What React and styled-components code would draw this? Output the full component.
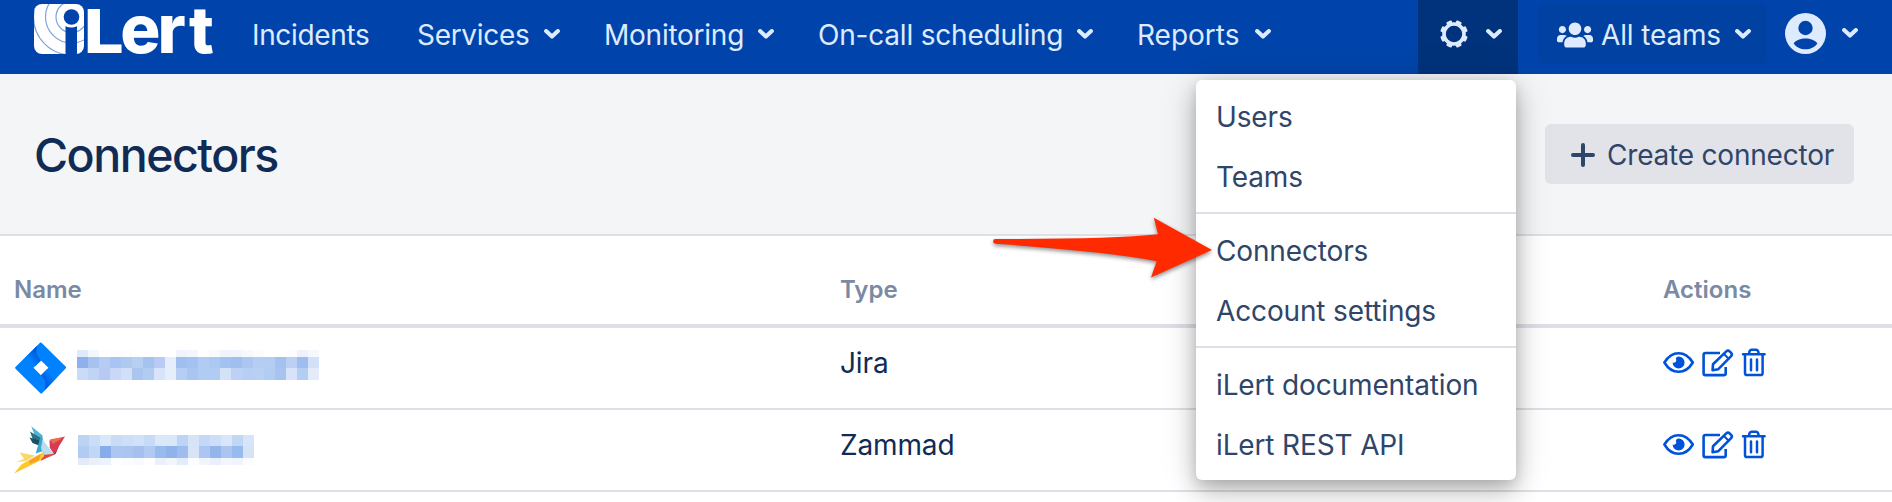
import React from "react";
import styled, { createGlobalStyle } from "styled-components";
import { FaUsers } from "react-icons/fa";

const GlobalStyle = createGlobalStyle`
  * { box-sizing: border-box; }
  html, body { margin: 0; padding: 0; background: #fff; overflow: hidden; }
  body {
    font-family: Inter, "Liberation Sans", sans-serif;
    font-size: 28px;
    font-weight: 380;
    line-height: 40px;
    letter-spacing: -0.14px;
    color: #102b55;
    -webkit-font-smoothing: antialiased;
  }
  svg { display: block; flex: none; }
`;

const Page = styled.div`
  position: relative;
  width: 1892px;
  height: 502px;
  overflow: hidden;
`;

const NavBar = styled.nav`
  display: flex;
  height: 74px;
  padding-left: 34px;
  background: #0044ab;
  color: #deebff;
`;

const LogoLink = styled.a`
  display: block;
  width: 178px;
  padding-top: 4px;
  margin-right: 40px;
`;

const NavGroup = styled.div`
  display: flex;
  margin-right: ${(p) => p.$gap ?? 0}px;
`;

const NavItem = styled.a`
  display: flex;
  align-items: flex-start;
  width: ${(p) => p.$width}px;
  padding-top: 15px;
  white-space: nowrap;
  letter-spacing: ${(p) => p.$spacing ?? -0.2}px;
`;

const NavLabel = styled.span`
  flex: 1;
`;

const Caret = styled.span`
  padding: ${(p) => p.$top ?? 14}px 0 0;
`;

const GearButton = styled.a`
  display: flex;
  justify-content: space-between;
  width: 100px;
  height: 74px;
  padding: 15px 16px 0 22px;
  margin-left: 147px;
  background: #00337c;
`;

const GearSlot = styled.span`
  padding-top: 5px;
`;

const TeamPicker = styled.a`
  display: flex;
  width: 229px;
  height: 60px;
  margin: 4px 0 0 20px;
  padding: 11px 16px 0 19px;
  border-radius: 6px;
  background: #0041a2;
  white-space: nowrap;
`;

const TeamIcon = styled.span`
  width: 44px;
  padding-top: 2px;
`;

const Account = styled.a`
  display: flex;
  gap: 16px;
  margin-left: 18px;
  padding-top: 13px;
`;

const PageHeader = styled.header`
  display: flex;
  justify-content: space-between;
  align-items: flex-start;
  height: 162px;
  padding: 50px 38px 0 34px;
  background: #f4f5f7;
  border-bottom: 2px solid #dfe0e7;
`;

const Title = styled.h1`
  margin: -1px 0 0;
  font-size: 46.5px;
  line-height: 64px;
  font-weight: 480;
  letter-spacing: -1.5px;
`;

const CreateButton = styled.button`
  display: flex;
  align-items: center;
  gap: 12px;
  width: 309px;
  height: 60px;
  padding: 2px 0 0 26px;
  border: 0;
  border-radius: 6px;
  background: #e2e3e9;
  color: #2f4569;
  font: inherit;
  letter-spacing: -0.2px;
  white-space: nowrap;
`;

const Row = styled.div`
  display: grid;
  grid-template-columns: 826px 823px 1fr;
  height: 82px;
  padding-left: 14px;
  border-bottom: 2px solid #dfe0e7;
`;

const HeadRow = styled(Row)`
  height: 92px;
  padding-top: 34px;
  border-bottom-width: 4px;
  font-size: 24px;
  font-weight: 600;
  letter-spacing: 0;
  color: #7a8aa3;
`;

const NameCell = styled.div`
  display: flex;
  align-items: flex-start;
`;

const Brand = styled.span`
  width: 54px;
  padding-top: 14px;
`;

const TypeCell = styled.div`
  padding-top: 15px;
`;

const Actions = styled.div`
  display: flex;
  padding: 18px 0 0;
`;

const Redacted = styled.div`
  display: grid;
  grid-template-columns: repeat(${(p) => p.$cols}, 11px);
  grid-template-rows: ${(p) => p.$rows};
  margin: ${(p) => p.$top}px 0 0 ${(p) => p.$left}px;
`;

const Tile = styled.i`
  background: ${(p) => p.$color};
`;

const Menu = styled.div`
  position: absolute;
  left: 1196px;
  top: 80px;
  width: 320px;
  height: 400px;
  border-radius: 6px;
  background: #fff;
  color: #2f4569;
  box-shadow: 0 12px 24px rgba(0, 0, 0, 0.22), 0 0 40px rgba(0, 0, 0, 0.12), 0 4px 12px rgba(0, 0, 0, 0.1);
`;

const MenuSection = styled.div`
  padding: 8px 0 4px;
  & + & { border-top: 2px solid #dfe0e7; }
`;

const MenuItem = styled.a`
  display: block;
  height: 60px;
  padding: 9px 20px 0;
  white-space: nowrap;
`;

const Pointer = styled.svg`
  position: absolute;
  left: 986px;
  top: 210px;
  filter: drop-shadow(0 2px 2px rgba(0, 0, 0, 0.45));
`;

const Chevron = () => (
  <svg width="16" height="11" viewBox="0 0 16 11">
    <path d="M2.1 2.1 8 7.6l5.9-5.5" fill="none" stroke="#deebff" strokeWidth="4.1" strokeLinecap="round" strokeLinejoin="round" />
  </svg>
);

const Gear = () => (
  <svg width="28" height="28" viewBox="-14 -14 28 28">
    <circle r="10" fill="none" stroke="#deebff" strokeWidth="3.600" />
    {[0, 1, 2, 3, 4, 5, 6, 7].map((i) => (
      <rect key={i} x="-2.900" y="-13.800" width="5.800" height="4" rx="1.200" fill="#deebff" transform={`rotate(${22.5 + i * 45})`} />
    ))}
  </svg>
);

const Avatar = () => (
  <svg width="41" height="41" viewBox="0 0 41 41">
    <circle cx="20.5" cy="20.5" r="20.5" fill="#deebff" />
    <circle cx="20.5" cy="15" r="7.2" fill="#0044ab" />
    <path d="M8.6 30.4c2.2-3 7-4.8 11.9-4.8s9.700 1.800 11.900 4.800c-2.600 3.600-7 5.800-11.900 5.800s-9.300-2.200-11.900-5.800z" fill="#0044ab" />
  </svg>
);

const LogoSvg = styled.svg`
  overflow: visible;
  letter-spacing: 0;
`;

const Logo = () => (
  <LogoSvg width="178" height="50" viewBox="0 0 178 50">
    <defs>
      <clipPath id="badge"><rect width="50" height="50" rx="8" /></clipPath>
    </defs>
    <g clipPath="url(#badge)">
      <rect width="50" height="50" fill="#fff" />
      <g fill="none" stroke="#7ba3dc" strokeWidth="1.2">
        <circle cx="37.500" cy="13" r="15.500" />
        <circle cx="37.500" cy="13" r="26" />
        <circle cx="37.500" cy="13" r="38" />
      </g>
      <circle cx="37.500" cy="13" r="10.500" fill="#fff" />
      <circle cx="37.500" cy="13" r="7.800" fill="#0044ab" />
      <path d="M31.500 22.300q6 2.600 11.500 0V50H31.500z" fill="#0044ab" />
    </g>
    <g fill="#fff" fontFamily="Inter" fontWeight="800">
      <text x="0" y="0" transform="translate(49.800 49) scale(1.180 1)" fontSize="60" fontWeight="760">L</text>
      <text y="49.300" fontSize="67"><tspan x="86.200 123.500">er</tspan><tspan x="155" fontSize="65">t</tspan></text>
    </g>
  </LogoSvg>
);

const Plus = () => (
  <svg width="24" height="24" viewBox="0 0 24 24">
    <path d="M12 2v20M2 12h20" stroke="#2f4569" strokeWidth="4" strokeLinecap="round" />
  </svg>
);

const ActionIcons = () => (
  <svg width="104" height="32" viewBox="0 0 104 32" fill="none" stroke="#0052d9" strokeWidth="2.600" strokeLinejoin="round" strokeLinecap="round">
    <path d="M1.400 16.500C5 10.500 10 7.200 15.600 7.200s10.600 3.300 14.200 9.300c-3.600 6-8.600 9.300-14.200 9.300S5 22.500 1.400 16.500z" />
    <path d="M15.600 10.500a6 6 0 1 1-6 6c.9.500 2.300.300 3-.5.800-.800.900-2 .3-3-.200-1 .900-2.500 2.700-2.500z" fill="#0052d9" stroke="none" />
    <path d="M57 7H42.500Q40.600 7 40.600 8.900V27.200Q40.600 29.100 42.500 29.100H60.800Q62.700 29.100 62.700 27.200V21" strokeLinecap="butt" />
    <path d="m49.600 24.300.4-6L63.300 5.400q1.700-1.600 3.300 0l1.500 1.500q1.600 1.700 0 3.300L55.100 23.300z" />
    <path d="m60.900 8 4.800 4.800" strokeWidth="2" />
    <path d="M80 8.200h21.600M86 8q.3-4 2.400-4.200h4.800Q95.500 4 95.700 8M82 8.500V27q0 2.100 2.100 2.100h13.400q2.100 0 2.100-2.100V8.500M88 13.400V24.300M94 13.400V24.300" strokeWidth="2.500" />
  </svg>
);

const JiraMark = () => (
  <svg width="52" height="52" viewBox="0 0 52 52">
    <defs>
      <linearGradient id="ja" x1="0.900" y1="0.100" x2="0.300" y2="0.700">
        <stop offset="0.150" stopColor="#0050d4" /><stop offset="1" stopColor="#0082ff" />
      </linearGradient>
      <linearGradient id="jb" x1="0.100" y1="0.900" x2="0.700" y2="0.300">
        <stop offset="0.150" stopColor="#0050d4" /><stop offset="1" stopColor="#0082ff" />
      </linearGradient>
    </defs>
    <path d="M27.500 .8 51.600 24.500q1 1 0 2L28 51.200q-.8.600-1.600 0L1.700 27q-1.200-1.200 0-2.300L26 .8q.8-.6 1.500 0zM27 18.500l-7.500 7.300 7.500 7.400 7.400-7.400z" fill="#0082ff" fillRule="evenodd" />
    <path d="M27 18.500C22 14 21.500 8 23.500 3.600L10.500 16.200q5-1.500 10.500 8.200z" fill="url(#ja)" />
    <path d="M27 33.200c5 4.500 5.500 10.500 3.500 15.200l12.700-13.200q-5.500 1-10.200-8z" fill="url(#jb)" />
  </svg>
);

const ZammadMark = () => (
  <svg width="52" height="52" viewBox="0 0 52 52">
    <path d="M17.300 2.300 28 11l.6 7.500-8-7.500z" fill="#4fb4d6" />
    <path d="M16 7.500 28.500 15l-1 4.500L19 16z" fill="#2d6f88" />
    <path d="m15.500 13.500 12.300 3.800-1 5-8.300-3.300z" fill="#17505f" />
    <path d="m28.300 11 1 16-7.600 2.600 4-14z" fill="#3fa7cf" />
    <path d="m28.600 15.500 11 14.500-10.300 1.500-2.300-7.500z" fill="#b8def0" />
    <path d="M35.500 16.500 51 12.500l-5.700 9.200-5.500 8-4-6z" fill="#d83a52" />
    <path d="m36 15.300 14-2.300-11 7z" fill="#ef6a4c" />
    <path d="m39.600 29.800 5.500-8 -3.500 8.300-14.600 6.500z" fill="#b81f3e" />
    <path d="m29 31 11-1.200-13.500 7.200z" fill="#e8452f" />
    <path d="M30 27.700v4.500L25.500 37 0 49.500 7.500 40.500 20 33z" fill="#ffc62e" />
    <path d="M5.500 28.500 21 31.500l-9 5.500L2 38.300l8-3.600z" fill="#fbd76a" />
    <path d="m15 37 12-7-2 6-9 4z" fill="#f2a42a" />
  </svg>
);

const names = [
  {
    rows: "7px 11px 12px", top: 22, left: 9, cols: 22,
    tiles: "dfeafa f3f6fd fdfeff fcfdff fcfdff fdfeff fdfeff ffffff ffffff eff4fd f3f7fd ffffff f8fbfe eef3fc f0f4fd f5f8fd fafcff ffffff ffffff fbfcff eef2fc f6f8fe 8fb0ec a6c3ef b8ccf3 a9c3f2 aecaf1 b6cff3 a5c3ef b9cbf4 e6eefb 9fbfee a3c2f0 b1ccf2 acc9f1 a4c2f0 9fbfee abc6f1 b6cdf3 b4cdf2 a4c1f0 bdd0f3 9dbeee d2e1f7 c9dbf6 c0d5f4 b7caf3 c9d8f7 d1dff8 abc5f1 b2cbf3 d8e4f9 e6eefb b5cef3 a9c6f0 b1ccf2 b1ccf2 d4e2f8 bdd1f4 b7cff4 b9cff4 b2cdf3 a7c4f0 d7e3f9 b4cdf2 e4ecfb",
  },
  {
    rows: "11px 12px 7px", top: 25, left: 10, cols: 16,
    tiles: "bdd3f4 cbdcf7 d8e7fa c9dcf6 cddff8 d0e1f8 c8dbf6 dae8fa d9e7fa bed4f4 d7e4f8 c4d8f5 cddff8 d9e5fa c1d8f5 d7e5fa b1ccf2 c2d7f6 86adea acc6f1 abc5f1 a5c0ef b1c9f3 98bbed 91b3eb 9ebcee d7e4f8 acc5f2 93b5ec a9c5f0 98bbed d4e4f6 e3ebfa e9effb edf3fd fdfeff fafcff f7fafe ffffff ebf1fc f1f6fd e3ecfb fcfdff f1f5fd e9effb f3f7fd f0f5fd fafcff",
  },
];

const HiddenName = ({ rows, top, left, cols, tiles }) => (
  <Redacted $rows={rows} $top={top} $left={left} $cols={cols}>
    {tiles.split(" ").map((c, i) => <Tile key={i} $color={`#${c}`} />)}
  </Redacted>
);

const navItems = [
  { label: "Incidents", width: 165, spacing: -0.35 },
  { label: "Services", width: 143, gap: 44, spacing: -0.3 },
  { label: "Monitoring", width: 170, gap: 44, spacing: -0.25 },
  { label: "On-call scheduling", width: 275, gap: 44 },
  { label: "Reports", width: 134, spacing: 0 },
];

export default function App() {
  return (
    <>
      <GlobalStyle />
      <Page>
        <NavBar>
          <LogoLink><Logo /></LogoLink>
          {navItems.map((item, i) => (
            <NavGroup key={item.label} $gap={item.gap}>
              <NavItem $width={item.width} $spacing={item.spacing}>
                <NavLabel>{item.label}</NavLabel>
                {i > 0 && <Caret><Chevron /></Caret>}
              </NavItem>
            </NavGroup>
          ))}
          <GearButton>
            <GearSlot><Gear /></GearSlot>
            <Caret><Chevron /></Caret>
          </GearButton>
          <TeamPicker>
            <TeamIcon><FaUsers size={36} color="#deebff" /></TeamIcon>
            <NavLabel>All teams</NavLabel>
            <Caret><Chevron /></Caret>
          </TeamPicker>
          <Account>
            <Avatar />
            <Caret $top={15}><Chevron /></Caret>
          </Account>
        </NavBar>
        <PageHeader>
          <Title>Connectors</Title>
          <CreateButton><Plus /><span>Create connector</span></CreateButton>
        </PageHeader>
        <HeadRow><span>Name</span><span>Type</span><span>Actions</span></HeadRow>
        <Row>
          <NameCell><Brand><JiraMark /></Brand><HiddenName {...names[0]} /></NameCell>
          <TypeCell>Jira</TypeCell>
          <Actions><ActionIcons /></Actions>
        </Row>
        <Row>
          <NameCell><Brand><ZammadMark /></Brand><HiddenName {...names[1]} /></NameCell>
          <TypeCell>Zammad</TypeCell>
          <Actions><ActionIcons /></Actions>
        </Row>
        <Menu>
          <MenuSection><MenuItem>Users</MenuItem><MenuItem>Teams</MenuItem></MenuSection>
          <MenuSection><MenuItem>Connectors</MenuItem><MenuItem>Account settings</MenuItem></MenuSection>
          <MenuSection><MenuItem>iLert documentation</MenuItem><MenuItem>iLert REST API</MenuItem></MenuSection>
        </Menu>
        <Pointer width="240" height="80" viewBox="986 210 240 80">
          <path d="M995.500 238.900Q1110 239.500 1158 234.300L1153.800 217.800 1212 250 1151 277.500 1156.700 261.200Q1110 252 995.500 243.800A2.450 2.450 0 0 1 995.500 238.900z" fill="#ff2a00" />
        </Pointer>
      </Page>
    </>
  );
}
